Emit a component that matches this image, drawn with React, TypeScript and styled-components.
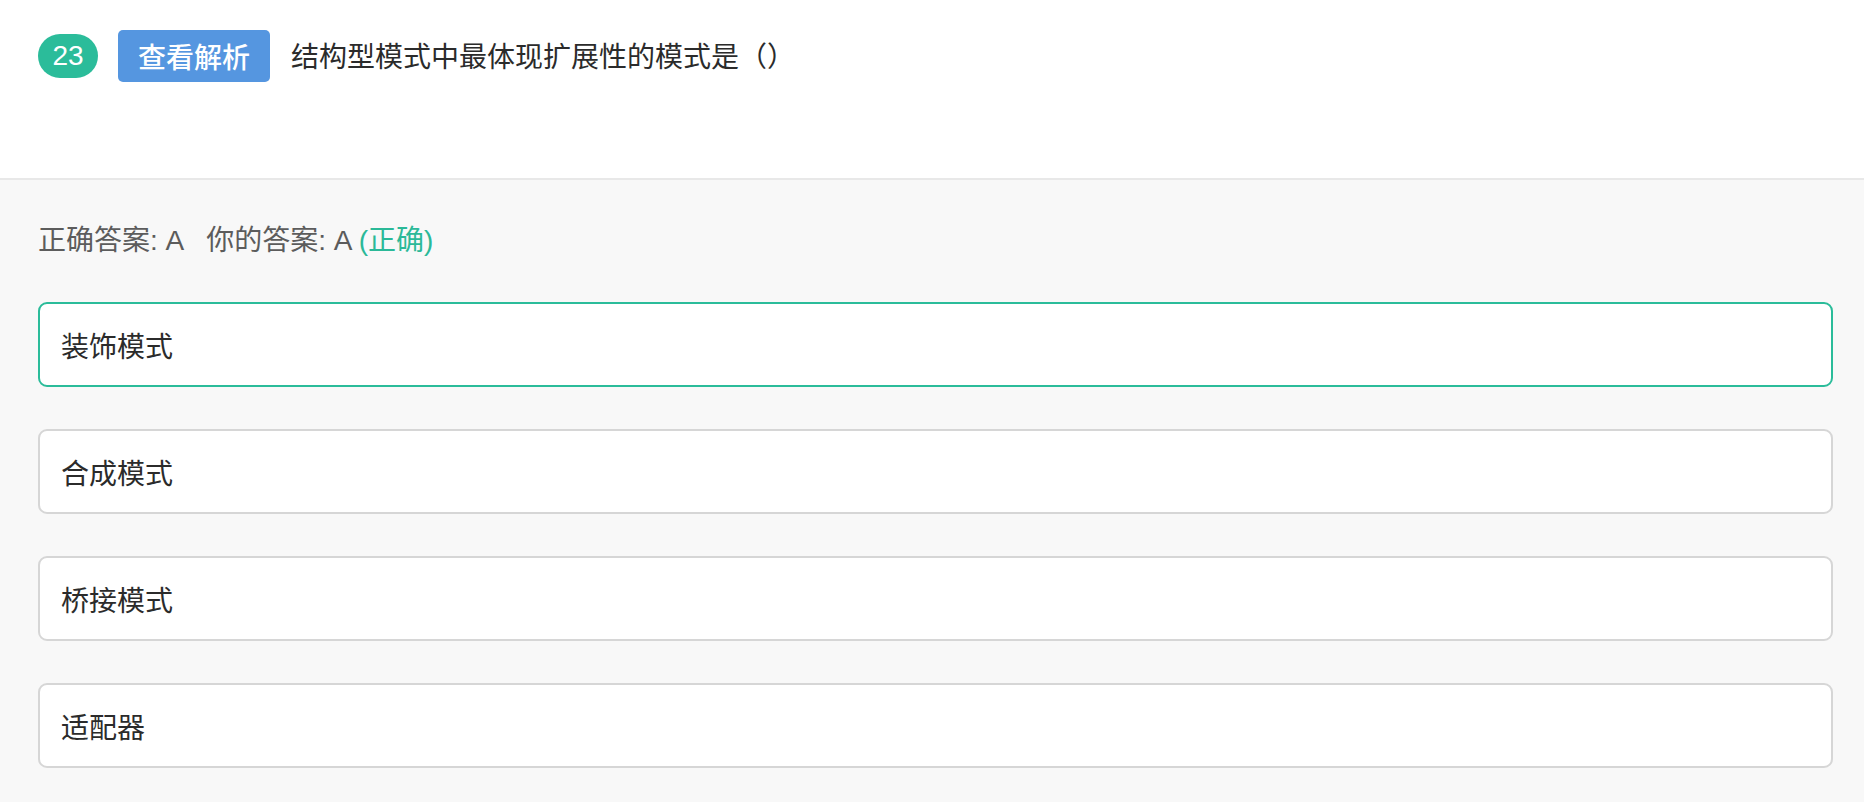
import React from "react";
import styled, { createGlobalStyle } from "styled-components";

const GlobalStyle = createGlobalStyle`
  html, body {
    margin: 0;
    padding: 0;
    background: #f8f8f8;
    min-height: 100%;
  }
  body {
    font-family: "Liberation Sans", "Noto Sans CJK SC", sans-serif;
    font-size: 28px;
    color: #333;
  }
`;

const Page = styled.div`
  display: flex;
  flex-direction: column;
  min-height: 802px;
  background: #f8f8f8;
`;

const Header = styled.header`
  background: #fff;
  height: 180px;
  box-sizing: border-box;
  padding: 30px 31px 0 38px;
  border-bottom: 2px solid #e8e8e8;
`;

const TitleRow = styled.div`
  display: flex;
  align-items: center;
  height: 52px;
`;

const NumberBadge = styled.span`
  display: inline-flex;
  align-items: center;
  justify-content: center;
  width: 60px;
  height: 44px;
  border-radius: 22px;
  background: #2bbc9a;
  color: #fff;
  font-size: 28px;
  margin-right: 20px;
  margin-top: -1px;
`;

const AnalysisButton = styled.button`
  display: inline-flex;
  align-items: center;
  justify-content: center;
  width: 152px;
  height: 52px;
  border: none;
  border-radius: 5px;
  background: #5596e0;
  color: #fff;
  font-family: inherit;
  font-size: 28px;
  font-weight: 500;
  padding: 0;
  margin-right: 21px;
  cursor: pointer;
`;

const Question = styled.span`
  font-size: 28px;
  color: #2b2b2b;
  margin-top: -3px;
`;

const Body = styled.section`
  flex: 1;
  padding: 41px 31px 37px 38px;
  display: flex;
  flex-direction: column;
`;

const AnswerLine = styled.div`
  font-size: 28px;
  line-height: 40px;
  color: #5c5c5c;
  margin-bottom: 41px;
`;

const AnswerPart = styled.span`
  margin-right: 22px;
`;

const Verdict = styled.span<{ $ok: boolean }>`
  color: ${(p) => (p.$ok ? "#2bb998" : "#e05555")};
`;

const OptionList = styled.div`
  display: flex;
  flex-direction: column;
  gap: 42px;
`;

const Option = styled.div<{ $correct?: boolean }>`
  box-sizing: border-box;
  height: 85px;
  display: flex;
  align-items: center;
  padding: 0 21px;
  background: #fff;
  border: 2px solid ${(p) => (p.$correct ? "#2bbc9a" : "#d6d6d6")};
  border-radius: 9px;
  font-size: 28px;
  color: #2b2b2b;
`;

const options = [
  { text: "装饰模式", correct: true },
  { text: "合成模式" },
  { text: "桥接模式" },
  { text: "适配器" },
];

export default function App() {
  return (
    <>
      <GlobalStyle />
      <Page>
        <Header>
          <TitleRow>
            <NumberBadge>23</NumberBadge>
            <AnalysisButton>查看解析</AnalysisButton>
            <Question>结构型模式中最体现扩展性的模式是（）</Question>
          </TitleRow>
        </Header>
        <Body>
          <AnswerLine>
            <AnswerPart>正确答案: A</AnswerPart>
            你的答案: A <Verdict $ok>(正确)</Verdict>
          </AnswerLine>
          <OptionList>
            {options.map((o) => (
              <Option key={o.text} $correct={o.correct}>
                {o.text}
              </Option>
            ))}
          </OptionList>
        </Body>
      </Page>
    </>
  );
}
